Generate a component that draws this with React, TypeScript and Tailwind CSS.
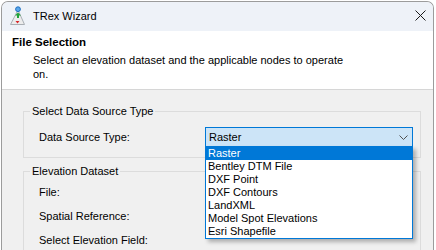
import React from "react";

function AppIcon() {
  return (
    <svg width="16" height="19" viewBox="0 0 16 19" className="shrink-0">
      <polygon points="9,4 1.5,18.5 15.5,18.5" fill="#ececec" stroke="#a9aeb4" strokeWidth="1" />
      <circle cx="9" cy="3.2" r="2.4" fill="#5aa7ea" stroke="#1f6fc0" strokeWidth="1" />
      <polygon points="9,6.5 6,9.5 8,9.5 8,12 10,12 10,9.5 12,9.5" fill="#22a33a" />
      <polygon points="8.5,17.5 6.5,15 10.5,15" fill="#d8262a" />
    </svg>
  );
}

function CloseX() {
  return (
    <svg width="11" height="11" viewBox="0 0 11 11" className="shrink-0 ml-auto -mt-[3px]">
      <path d="M0.5 0.5 L10.5 10.5 M10.5 0.5 L0.5 10.5" stroke="#1a1a1a" strokeWidth="1" fill="none" />
    </svg>
  );
}

function Chevron() {
  return (
    <svg width="9" height="5" viewBox="0 0 9 5" className="shrink-0">
      <path d="M0.5 0.5 L4.5 4.5 L8.5 0.5" stroke="#505050" strokeWidth="1" fill="none" />
    </svg>
  );
}

const items = [
  "Raster",
  "Bentley DTM File",
  "DXF Point",
  "DXF Contours",
  "LandXML",
  "Model Spot Elevations",
  "Esri Shapefile",
];

export default function App() {
  return (
    <div className="w-[436px] h-[250px] bg-white overflow-hidden pt-px font-['Liberation_Sans',Arial,sans-serif] text-[11px] text-black">
      <div className="ml-px w-[433px] h-[249px] border-l border-t border-r border-[#9c9c9c] rounded-t-[7px] overflow-hidden flex flex-col bg-[#f0f0f0]">
        {/* Title bar */}
        <div className="h-[29px] shrink-0 bg-[#eef2f8] flex items-center pl-[7px] pr-[7px]">
          <div className="-mt-[2px]">
            <AppIcon />
          </div>
          <span className="ml-[8px] leading-[14px] -mt-[2px]">TRex Wizard</span>
          <CloseX />
        </div>
        {/* Header */}
        <div className="h-[59px] shrink-0 bg-white border-b border-[#d6d6d6] pl-[10px] pt-[4px]">
          <div className="font-bold text-[11.5px] leading-[14px]">File Selection</div>
          <div className="mt-[4px] pl-[21px] leading-[14px]">
            Select an elevation dataset and the applicable nodes to operate
            <br />
            on.
          </div>
        </div>
        {/* Body */}
        <div className="pl-[21px]">
          <fieldset className="mt-[14px] w-[398px] border border-[#dcdcdc]">
            <legend className="ml-[6px] px-[2px] leading-[14px]">Select Data Source Type</legend>
            <div className="flex items-center pt-[9px] pb-[10px] pl-[15px]">
              <span className="w-[166px] leading-[14px]">Data Source Type:</span>
              <div className="relative w-[208px] h-[20px] bg-[#cce4f7] border border-[#0078d7] flex items-center pl-[3px] pr-[4px]">
                <span className="leading-[14px]">Raster</span>
                <div className="ml-auto">
                  <Chevron />
                </div>
                <div className="absolute left-[-1px] top-[18px] w-[208px] bg-white border border-[#0078d7] shadow-[3px_3px_4px_rgba(0,0,0,0.28)] z-10">
                  {items.map((it, i) => (
                    <div
                      key={it}
                      className={
                        i === 0
                          ? "h-[13px] leading-[13px] pl-[2px] bg-[#0078d7] text-white"
                          : "h-[13px] leading-[13px] pl-[2px]"
                      }
                    >
                      {it}
                    </div>
                  ))}
                </div>
              </div>
            </div>
          </fieldset>
          <fieldset className="mt-[6px] w-[398px] h-[100px] border border-[#dcdcdc]">
            <legend className="ml-[6px] px-[2px] leading-[14px]">Elevation Dataset</legend>
            <div className="pt-[2px] pl-[15px] flex flex-col">
              <div className="h-[24px] flex items-center leading-[14px]">File:</div>
              <div className="h-[24px] flex items-center leading-[14px]">Spatial Reference:</div>
              <div className="h-[24px] flex items-center leading-[14px]">Select Elevation Field:</div>
            </div>
          </fieldset>
        </div>
      </div>
    </div>
  );
}
